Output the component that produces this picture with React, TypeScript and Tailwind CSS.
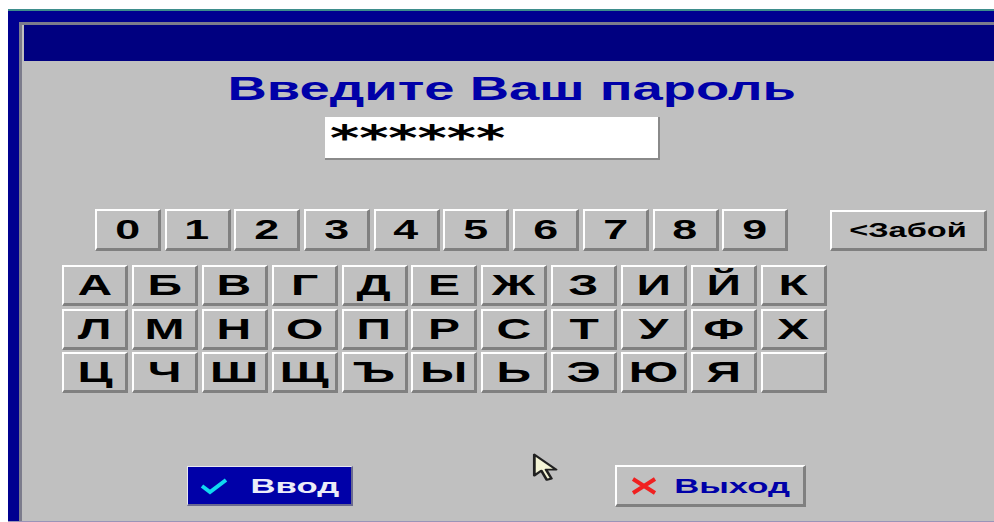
const face = "font-['Liberation_Sans',Arial,sans-serif] font-bold";

// raised 3D edge used by every key on the pad
const bevel =
  "bg-[#c0c0c0] border-t-2 border-l-2 border-t-white border-l-white border-r-[3px] border-b-[3px] border-r-[#808080] border-b-[#808080]";

const DIGITS = ["0", "1", "2", "3", "4", "5", "6", "7", "8", "9"];

const LETTERS = [
  ["А", "Б", "В", "Г", "Д", "Е", "Ж", "З", "И", "Й", "К"],
  ["Л", "М", "Н", "О", "П", "Р", "С", "Т", "У", "Ф", "Х"],
  ["Ц", "Ч", "Ш", "Щ", "Ъ", "Ы", "Ь", "Э", "Ю", "Я", ""],
];

function Key({ label, size }: { label: string; size: string }) {
  return (
    <div className={`${bevel} ${size} flex items-center justify-center shrink-0`}>
      <span className={`${face} inline-block scale-x-[1.6] text-black leading-none`}>{label}</span>
    </div>
  );
}

function Pointer() {
  return (
    <svg className="absolute left-[532px] top-[453px]" width="28" height="30" viewBox="0 0 18 28" preserveAspectRatio="none">
      <path
        d="M1.5 1.5 L1.5 21 L6 16.5 L9.5 25 L12.5 23.8 L9 15.5 L15.5 15.5 Z"
        fill="#f4f4d6"
        stroke="#202020"
        strokeWidth="1.8"
        strokeLinejoin="round"
      />
    </svg>
  );
}

export default function App() {
  return (
    <div className="relative w-[994px] h-[522px] bg-white pt-[9px] pl-[8px] overflow-hidden">
      <div className="h-full flex flex-col border-b border-b-[#9a94b8]">
        <div className="h-[2px] bg-[#3e8e8c]" />
        <div className="flex-1 flex flex-col bg-[#000090] pt-[11px] pl-[11px]">
          <div className="flex-1 flex flex-col bg-[#c0c0c0] border-t-[3px] border-l-[3px] border-t-[#7c7c8c] border-l-[#7c7c8c] pl-[2px]">
            {/* caption bar */}
            <div className="h-[36px] bg-[#000080]" />

            {/* heading */}
            <div className="mt-[10px] flex justify-center pl-[6px]">
              <span className={`${face} inline-block scale-x-[1.6] text-[34px] leading-[34px] text-[#0000a8]`}>
                Введите Ваш пароль
              </span>
            </div>

            {/* password field */}
            <div className="mt-[12px] ml-[301px] w-[335px] h-[43px] bg-white border-r-2 border-b-2 border-r-[#8a8a8a] border-b-[#8a8a8a] pl-[5px] pt-[3px]">
              <span className="inline-block origin-left scale-x-[1.55] font-['DejaVu_Sans',sans-serif] font-bold text-[36px] leading-[36px] text-black">
                ******
              </span>
            </div>

            {/* digits + backspace */}
            <div className="mt-[49px] ml-[71px] flex items-center">
              <div className="flex gap-[3.7px]">
                {DIGITS.map((d) => (
                  <Key key={d} label={d} size="w-[66px] h-[42px] text-[28px]" />
                ))}
              </div>
              <div className={`${bevel} ml-[42px] w-[157px] h-[41px] flex items-center justify-center`}>
                <span className={`${face} inline-block scale-x-[1.55] text-[21px] leading-none text-black`}>&lt;Забой</span>
              </div>
            </div>

            {/* alphabet */}
            <div className="mt-[14px] ml-[38px] flex flex-col gap-[2.5px]">
              {LETTERS.map((row, i) => (
                <div key={i} className="flex gap-[3.9px]">
                  {row.map((l, j) => (
                    <Key key={j} label={l} size="w-[66px] h-[41px] text-[30px]" />
                  ))}
                </div>
              ))}
            </div>

            {/* action buttons */}
            <div className="mt-[72px] ml-[163px] flex items-center">
              <div className="w-[166px] h-[40px] bg-[#0000a8] border-t border-l border-t-[#e8e8f0] border-l-[#e8e8f0] border-r-2 border-b-2 border-r-[#6a6a90] border-b-[#6a6a90] flex items-center pl-[12px]">
                <svg width="28" height="18" viewBox="0 0 28 18">
                  <polyline points="2,9 10,15 26,3" fill="none" stroke="#10d8f0" strokeWidth="4" />
                </svg>
                <span className={`${face} ml-[40px] inline-block scale-x-[1.65] text-[21px] leading-none text-[#ececf8]`}>Ввод</span>
              </div>
              <div className={`${bevel} ml-[262px] w-[191px] h-[42px] flex items-center pl-[12px]`}>
                <svg width="30" height="18" viewBox="0 0 30 18">
                  <path d="M4 2 L26 16 M26 2 L4 16" stroke="#f02020" strokeWidth="4" />
                </svg>
                <span className={`${face} ml-[38px] inline-block scale-x-[1.65] text-[21px] leading-none text-[#0000a8]`}>Выход</span>
              </div>
            </div>
          </div>
        </div>
      </div>
      <Pointer />
    </div>
  );
}
